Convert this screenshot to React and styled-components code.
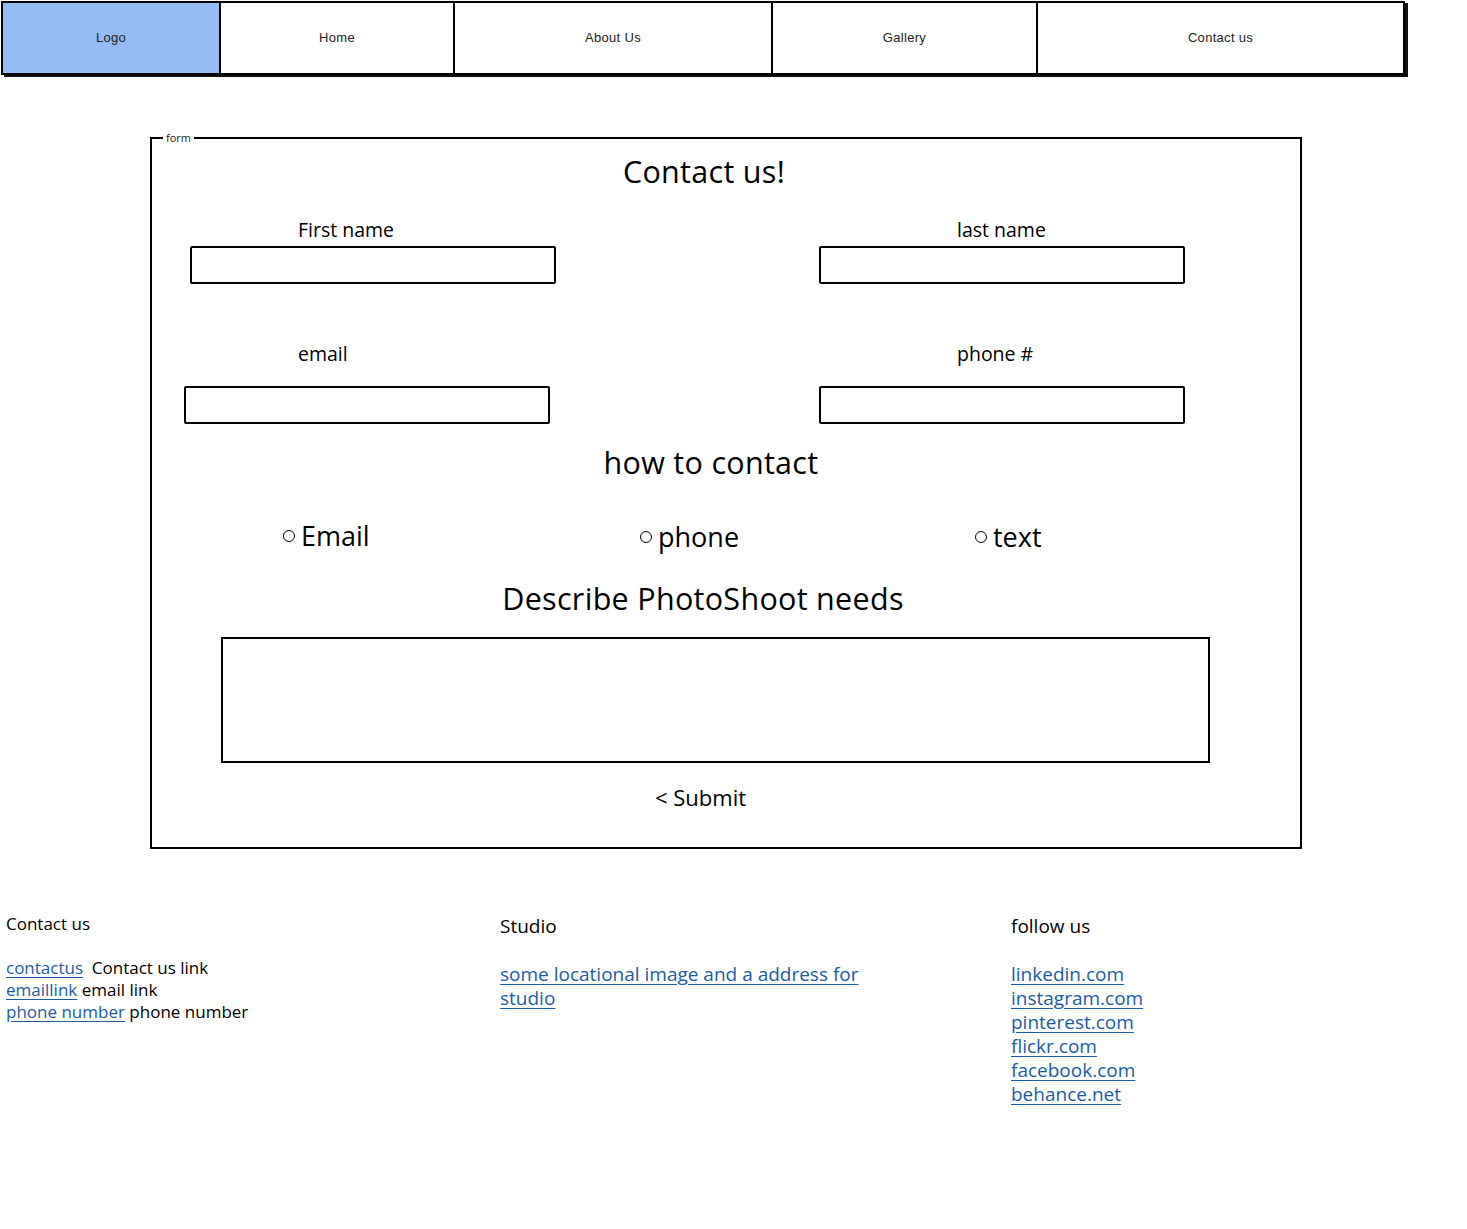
import React from 'react';
import styled, { createGlobalStyle } from 'styled-components';

const GlobalStyle = createGlobalStyle`
  body {
    margin: 0;
    background: #fff;
    font-family: "Open Sans", "Liberation Sans", sans-serif;
    color: #000;
  }
`

const Page = styled.div`
  width: 1467px;
  min-height: 1229px;
`

const Nav = styled.nav`
  display: flex;
  width: 1400px;
  height: 70px;
  margin: 1px 0 0 1px;
  border: 2px solid #000;
  box-shadow: 3px 2px 0 #111;
  font-family: "Liberation Sans", Arial, sans-serif;
  font-size: 13px;
  letter-spacing: 0.3px;
`

const NavItem = styled.div`
  display: flex;
  align-items: center;
  justify-content: center;
  box-sizing: border-box;
  padding-bottom: 1px;
  width: ${p => p.w}px;
  flex: ${p => (p.last ? 1 : 'none')};
  background: ${p => (p.logo ? '#94bbf2' : '#fff')};
  border-left: ${p => (p.logo ? 'none' : '2px solid #000')};
  color: #222;
`

const FormFrame = styled.div`
  position: relative;
  width: 1152px;
  height: 712px;
  margin: 62px 0 0 150px;
  border: 2px solid #000;
  padding: 14px 0 0 0;
  box-sizing: border-box;
`

const Legend = styled.span`
  position: absolute;
  top: -8px;
  left: 11px;
  padding: 0 3px;
  background: #fff;
  font-size: 11px;
  line-height: 14px;
  color: #222;
`

const Heading = styled.h2`
  margin: ${p => p.mt || 0}px 0 0 0;
  padding-right: ${p => p.shift || 0}px;
  text-align: center;
  font-size: 30.5px;
  font-weight: 400;
  line-height: 36px;
  letter-spacing: 0.3px;
`

const FieldRow = styled.div`
  display: flex;
  margin-top: ${p => p.mt}px;
  padding-left: ${p => p.pl}px;
`

const Field = styled.div`
  display: flex;
  flex-direction: column;
  width: ${p => p.w}px;
`

const Label = styled.label`
  margin-left: ${p => p.indent}px;
  margin-bottom: ${p => p.gap}px;
  font-size: 19.5px;
  line-height: 22px;
`

const TextBox = styled.div`
  width: 366px;
  height: 38px;
  border: 2px solid #000;
  border-radius: 2px;
  box-sizing: border-box;
`

const RadioRow = styled.div`
  display: flex;
  margin-top: 39px;
  padding-left: 131px;
`

const RadioOption = styled.div`
  display: flex;
  align-items: center;
  gap: 6px;
  width: ${p => p.w}px;
  margin-top: ${p => p.dy || 0}px;
  font-size: 27px;
  line-height: 30px;
`

const RadioDot = styled.span`
  width: 10px;
  height: 10px;
  border: 1.5px solid #000;
  border-radius: 50%;
  flex: none;
`

const TextArea = styled.div`
  width: 989px;
  height: 126px;
  margin: 21px 0 0 69px;
  border: 2px solid #000;
  box-sizing: border-box;
`

const Submit = styled.div`
  margin-top: 21px;
  padding-left: 503px;
  font-size: 22px;
  line-height: 26px;
`

const Footer = styled.footer`
  display: flex;
  margin-top: 64px;
  padding-left: 6px;
`

const Column = styled.div`
  width: ${p => p.w}px;
  font-size: ${p => p.fs}px;
  line-height: ${p => p.lh}px;
`

const ColTitle = styled.div`
  margin-top: ${p => p.mt || 0}px;
  margin-bottom: ${p => p.gap}px;
`

const Link = styled.a`
  color: #1c5ba6;
  text-decoration: underline;
  text-underline-offset: 3px;
`

const LinkLine = styled.div`
  max-width: ${p => (p.wrap ? '390px' : 'none')};
`

export default function App() {
  return (
    <Page>
      <GlobalStyle />
      <Nav>
        <NavItem logo w={216}>Logo</NavItem>
        <NavItem w={234}>Home</NavItem>
        <NavItem w={318}>About Us</NavItem>
        <NavItem w={265}>Gallery</NavItem>
        <NavItem last>Contact us</NavItem>
      </Nav>

      <FormFrame>
        <Legend>form</Legend>
        <Heading shift={44}>Contact us!</Heading>

        <FieldRow mt={30} pl={38}>
          <Field w={629}>
            <Label indent={108} gap={5}>First name</Label>
            <TextBox />
          </Field>
          <Field w={366}>
            <Label indent={138} gap={5}>last name</Label>
            <TextBox />
          </Field>
        </FieldRow>

        <FieldRow mt={59} pl={32}>
          <Field w={635}>
            <Label indent={114} gap={21}>email</Label>
            <TextBox />
          </Field>
          <Field w={366}>
            <Label indent={138} gap={21}>phone #</Label>
            <TextBox />
          </Field>
        </FieldRow>

        <Heading mt={20} shift={30}>how to contact</Heading>

        <RadioRow>
          <RadioOption w={357}><RadioDot />Email</RadioOption>
          <RadioOption w={335} dy={3}><RadioDot />phone</RadioOption>
          <RadioOption dy={3}><RadioDot />text</RadioOption>
        </RadioRow>

        <Heading mt={28} shift={46}>Describe PhotoShoot needs</Heading>

        <TextArea />

        <Submit>&lt; Submit</Submit>
      </FormFrame>

      <Footer>
        <Column w={494} fs={17} lh={22}>
          <ColTitle gap={22}>Contact us</ColTitle>
          <LinkLine><Link>contactus</Link>&nbsp; Contact us link</LinkLine>
          <LinkLine><Link>emaillink</Link> email link</LinkLine>
          <LinkLine><Link>phone number</Link> phone number</LinkLine>
        </Column>
        <Column w={511} fs={19} lh={24}>
          <ColTitle gap={24} mt={1}>Studio</ColTitle>
          <LinkLine wrap>
            <Link>some locational image and a address for studio</Link>
          </LinkLine>
        </Column>
        <Column fs={19} lh={24}>
          <ColTitle gap={24} mt={1}>follow us</ColTitle>
          <LinkLine><Link>linkedin.com</Link></LinkLine>
          <LinkLine><Link>instagram.com</Link></LinkLine>
          <LinkLine><Link>pinterest.com</Link></LinkLine>
          <LinkLine><Link>flickr.com</Link></LinkLine>
          <LinkLine><Link>facebook.com</Link></LinkLine>
          <LinkLine><Link>behance.net</Link></LinkLine>
        </Column>
      </Footer>
    </Page>
  );
}
